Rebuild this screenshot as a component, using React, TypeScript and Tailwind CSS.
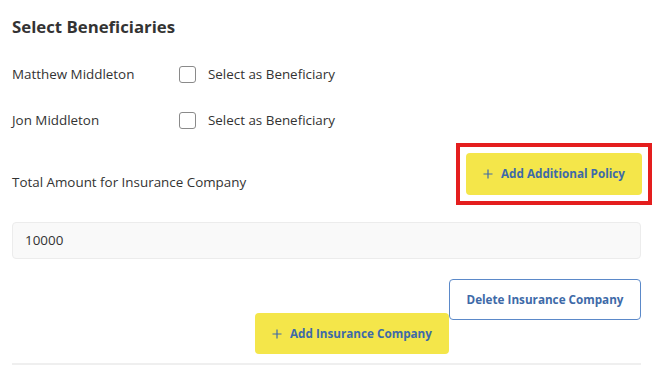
import React from "react";

function Plus() {
  return (
    <svg width="10" height="10" viewBox="0 0 10 10" className="shrink-0">
      <path d="M5 0.5V9.5M0.5 5H9.5" stroke="#3e6aa8" strokeWidth="1.2" />
    </svg>
  );
}

function Row({ name }: { name: string }) {
  return (
    <div className="flex items-center h-[20px]">
      <span className="w-[167px] text-[13.4px] text-[#333]">{name}</span>
      <span className="w-[17px] h-[17px] rounded-[3px] border border-[#8a8a8a] bg-white"></span>
      <span className="ml-[12px] text-[13.4px] text-[#333]">Select as Beneficiary</span>
    </div>
  );
}

export default function App() {
  return (
    <div
      className="w-[670px] h-[391px] bg-white overflow-hidden"
      style={{ fontFamily: '"Open Sans", sans-serif' }}
    >
      <div className="pl-[12px] pr-[29px] pt-[15px]">
        <h2 className="text-[16.8px] font-bold text-[#333] leading-[24px]">Select Beneficiaries</h2>
        <div className="mt-[25px] flex flex-col gap-[26px]">
          <Row name="Matthew Middleton" />
          <Row name="Jon Middleton" />
        </div>
        <div className="mt-[14px] flex items-center justify-between">
          <span className="text-[13.4px] text-[#333] mt-[15px]">Total Amount for Insurance Company</span>
          <div className="border-[4px] border-[#e41e1e] p-[6px] mr-[-11px] mt-[-1px]">
            <button className="w-[176px] h-[42px] rounded-[4px] bg-[#f4e64a] flex items-center justify-center gap-[8px] text-[11.7px] font-bold text-[#3e6aa8]">
              <Plus />
              Add Additional Policy
            </button>
          </div>
        </div>
        <div className="mt-[17px] h-[37px] rounded-[4px] border border-[#ececec] bg-[#f9f9f9] flex items-center pl-[12px] text-[13.4px] text-[#333]">
          10000
        </div>
        <div className="mt-[20px] flex justify-end">
          <button className="w-[192px] h-[41px] rounded-[4px] border border-[#5b89c9] bg-white text-[11.7px] font-bold text-[#3e6aa8]">
            Delete Insurance Company
          </button>
        </div>
        <div className="mt-[-7px] pl-[243px]">
          <button className="w-[194px] h-[41px] rounded-[4px] bg-[#f4e64a] flex items-center justify-center gap-[8px] text-[11.7px] font-bold text-[#3e6aa8]">
            <Plus />
            Add Insurance Company
          </button>
        </div>
        <div className="mt-[9px] h-[2px] bg-[#efefef]"></div>
      </div>
    </div>
  );
}
